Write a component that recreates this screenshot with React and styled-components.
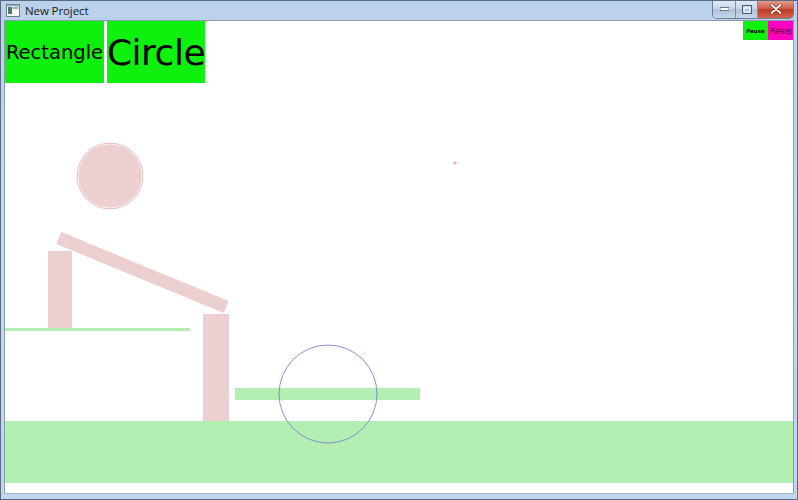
import React from "react";
import styled, { createGlobalStyle } from "styled-components";

const Global = createGlobalStyle`
  html, body {
    margin: 0;
    padding: 0;
    background: #fff;
  }
`

const Window = styled.div`
  width: 798px;
  height: 500px;
  display: flex;
  flex-direction: column;
  box-sizing: border-box;
  border: 1px solid #5a6b80;
  background: linear-gradient(180deg, #b9d1ea 0%, #c3daf1 40%, #bfd6ee 100%);
  font-family: "Open Sans", "Noto Sans", sans-serif;
  overflow: hidden;
`

const TitleBar = styled.div`
  height: 19px;
  display: flex;
  align-items: flex-start;
  justify-content: space-between;
  padding-left: 5px;
  flex-shrink: 0;
`

const TitleLeft = styled.div`
  display: flex;
  align-items: center;
  gap: 5px;
  height: 19px;
`

const TitleText = styled.span`
  font-size: 11.5px;
  color: #1a1a1a;
  letter-spacing: -0.1px;
`

const Caption = styled.div`
  display: flex;
  margin-right: 3px;
  margin-top: -1px;
  height: 18px;
  border: 1px solid #6d7f96;
  border-top: none;
  border-radius: 0 0 5px 5px;
  overflow: hidden;
`

const CapButton = styled.div`
  width: ${p => p.w}px;
  height: 18px;
  display: flex;
  align-items: center;
  justify-content: center;
  background: ${p => p.close
    ? "linear-gradient(180deg, #e5a496 0%, #d1614f 45%, #c13a22 55%, #d0654c 100%)"
    : "linear-gradient(180deg, #e3ecf6 0%, #c8d8ea 45%, #aec2da 55%, #c5d7ec 100%)"};
  border-left: ${p => p.first ? "none" : "1px solid #7e90a8"};
`

const Body = styled.div`
  flex: 1;
  display: flex;
  padding: 0 3px 5px 3px;
`

const Client = styled.div`
  position: relative;
  flex: 1;
  background: #fff;
  border: 1px solid #8c9cb0;
  border-bottom-color: #a9b8c8;
`

const Scene = styled.svg`
  position: absolute;
  left: 0;
  top: 0;
  width: 100%;
  height: 100%;
`

const Toolbar = styled.div`
  position: relative;
  display: flex;
  justify-content: space-between;
  align-items: flex-start;
`

const ToolGroup = styled.div`
  display: flex;
  gap: ${p => p.gap}px;
`

const ShapeButton = styled.button`
  width: ${p => p.w}px;
  height: 62px;
  border: none;
  padding: 0;
  background: #0ef00e;
  color: #000;
  font-family: "DejaVu Sans", Verdana, sans-serif;
  font-size: ${p => p.size}px;
  display: flex;
  align-items: center;
  justify-content: center;
  white-space: nowrap;
  letter-spacing: ${p => p.ls || 0}px;
`

const SmallButton = styled.button`
  width: 25px;
  height: 19px;
  border: none;
  padding: 0;
  background: ${p => p.bg};
  color: ${p => p.fg};
  font-family: ${p => p.bold ? '"DejaVu Sans", sans-serif' : '"Liberation Sans", Arial, sans-serif'};
  font-size: ${p => p.size}px;
  font-weight: ${p => p.bold ? 700 : 400};
  letter-spacing: ${p => p.bold ? 0 : -0.2}px;
  display: flex;
  align-items: center;
  justify-content: center;
  overflow: visible;
  white-space: nowrap;
`

const pink = "#ecd0d0";
const green = "#b3eeb3";

export default function App() {
  return (
    <>
      <Global />
      <Window>
        <TitleBar>
          <TitleLeft>
            <svg width="14" height="13" viewBox="0 0 14 13">
              <rect x="0.5" y="0.5" width="13" height="12" fill="#f4f6f8" stroke="#6e7b88" />
              <rect x="2" y="3" width="4" height="7" fill="#4f7d6a" />
              <rect x="7" y="3" width="5" height="2" fill="#9aa8b5" />
              <rect x="1" y="1" width="12" height="1.5" fill="#9fb6cc" />
            </svg>
            <TitleText>New Project</TitleText>
          </TitleLeft>
          <Caption>
            <CapButton w={22} first>
              <svg width="9" height="4"><rect x="0" y="0.5" width="9" height="3" fill="#fff" stroke="#4a5a70" strokeWidth="0.8" /></svg>
            </CapButton>
            <CapButton w={21}>
              <svg width="10" height="9"><rect x="0.5" y="0.5" width="9" height="8" fill="none" stroke="#4a5a70" /><rect x="2" y="3" width="6" height="4" fill="none" stroke="#fff" /></svg>
            </CapButton>
            <CapButton w={35} close>
              <svg width="12" height="10" viewBox="0 0 12 10">
                <path d="M1.5 1 L10.5 9 M10.5 1 L1.5 9" stroke="#5a1a10" strokeWidth="3" strokeLinecap="round" />
                <path d="M1.5 1 L10.5 9 M10.5 1 L1.5 9" stroke="#fff" strokeWidth="1.8" strokeLinecap="round" />
              </svg>
            </CapButton>
          </Caption>
        </TitleBar>
        <Body>
          <Client>
            <Scene viewBox="0 0 788 472" preserveAspectRatio="none">
              <rect x="0" y="400" width="788" height="62" fill={green} />
              <rect x="0" y="307" width="185" height="3" fill={green} />
              <rect x="230" y="367" width="185" height="12" fill={green} />
              <rect x="43" y="230" width="24" height="77" fill={pink} />
              <rect x="198" y="293" width="26" height="107" fill={pink} />
              <rect x="-90.5" y="-6.5" width="181" height="13" fill={pink} transform="translate(137.5 251.5) rotate(22.4)" />
              <circle cx="105" cy="155" r="33" fill={pink} />
              <circle cx="105" cy="155" r="32" fill="none" stroke="#fff" strokeWidth="0.7" />
              <circle cx="105" cy="155" r="33" fill="none" stroke="#e8a8a8" strokeWidth="0.6" />
              <line x1="105" y1="155" x2="136" y2="155" stroke="#e4bcbc" strokeWidth="0.8" />
              <circle cx="450" cy="142" r="1.6" fill="#f0a8b0" />
              <circle cx="323" cy="373" r="49" fill="none" stroke="#8080d8" strokeWidth="0.9" />
            </Scene>
            <Toolbar>
              <ToolGroup gap={3}>
                <ShapeButton w={99} size={19.5}>Rectangle</ShapeButton>
                <ShapeButton w={98} size={36} ls={-0.5}>Circle</ShapeButton>
              </ToolGroup>
              <ToolGroup gap={0}>
                <SmallButton bg="#0ef00e" fg="#000" size={5.5} bold>Pause</SmallButton>
                <SmallButton bg="#ff00c0" fg="#4a0638" size={8.5}>Reset</SmallButton>
              </ToolGroup>
            </Toolbar>
          </Client>
        </Body>
      </Window>
    </>
  );
}
